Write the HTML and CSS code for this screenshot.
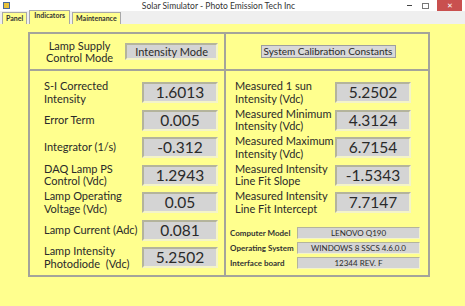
FILE: index.html
```html
<!DOCTYPE html>
<html lang="en">
<head>
  <meta charset="UTF-8" />
  <title>Solar Simulator - Photo Emission Tech Inc</title>
  <link rel="stylesheet" href="styles.css">
</head>
<body>
  <div class="window">
    <div class="titlebar">
      <span class="app-icon"></span>
      <span class="title">Solar Simulator - Photo Emission Tech Inc</span>
      <div class="controls">
        <span class="ctl-min"></span>
        <span class="ctl-max"></span>
        <span class="ctl-close">&#x2715;</span>
      </div>
    </div>

    <div class="tabs">
      <div class="tab">Panel</div>
      <div class="tab active">Indicators</div>
      <div class="tab">Maintenance</div>
    </div>

    <div class="panel">
      <div class="frame">
        <div class="cell cell-tl">
          <div class="mode-label">Lamp Supply<br>Control Mode</div>
          <div class="mode-box">Intensity Mode</div>
        </div>
        <div class="cell cell-tr">
          <div class="calib-btn">System Calibration Constants</div>
        </div>

        <div class="cell cell-bl">
          <div class="row"><div class="label">S-I Corrected<br>Intensity</div><div class="value">1.6013</div></div>
          <div class="row"><div class="label">Error Term</div><div class="value">0.005</div></div>
          <div class="row"><div class="label">Integrator (1/s)</div><div class="value">-0.312</div></div>
          <div class="row"><div class="label">DAQ Lamp PS<br>Control (Vdc)</div><div class="value">1.2943</div></div>
          <div class="row"><div class="label">Lamp Operating<br>Voltage (Vdc)</div><div class="value">0.05</div></div>
          <div class="row"><div class="label">Lamp Current (Adc)</div><div class="value">0.081</div></div>
          <div class="row"><div class="label">Lamp Intensity<br>Photodiode&nbsp; (Vdc)</div><div class="value">5.2502</div></div>
        </div>

        <div class="cell cell-br">
          <div class="row"><div class="label">Measured 1 sun<br>Intensity (Vdc)</div><div class="value">5.2502</div></div>
          <div class="row"><div class="label">Measured Minimum<br>Intensity (Vdc)</div><div class="value">4.3124</div></div>
          <div class="row"><div class="label">Measured Maximum<br>Intensity (Vdc)</div><div class="value">6.7154</div></div>
          <div class="row"><div class="label">Measured Intensity<br>Line Fit Slope</div><div class="value">-1.5343</div></div>
          <div class="row"><div class="label">Measured Intensity<br>Line Fit Intercept</div><div class="value">7.7147</div></div>

          <div class="info">
            <div class="info-row"><span class="info-label">Computer Model</span><span class="info-box">LENOVO Q190</span></div>
            <div class="info-row"><span class="info-label">Operating System</span><span class="info-box">WINDOWS 8 SSCS 4.6.0.0</span></div>
            <div class="info-row"><span class="info-label">Interface board</span><span class="info-box">12344 REV. F</span></div>
          </div>
        </div>
      </div>
    </div>
  </div>
</body>
</html>
```

FILE: styles.css
```css
body {
  margin: 0;
  font-family: 'Lato', 'Open Sans', sans-serif;
  color: #2a2a2a;
  background: #ffff8e;
}

.window {
  width: 465px;
  height: 306px;
  display: flex;
  flex-direction: column;
  overflow: hidden;
}

/* Title bar */
.titlebar {
  height: 11px;
  background: #fff;
  display: flex;
  align-items: center;
}

.app-icon {
  width: 5px;
  height: 5px;
  margin-left: 3px;
  background: #e8c23a;
  border: 1px solid #4a6a9a;
}

.title {
  flex: 1;
  text-align: center;
  font-size: 8.5px;
  color: #333;
  margin-left: 20px;
}

.controls {
  display: flex;
  align-items: center;
  height: 100%;
}

.ctl-min {
  width: 5px;
  height: 1px;
  background: #444;
  margin-right: 10px;
}

.ctl-max {
  width: 5px;
  height: 4px;
  border: 1px solid #777;
  margin-right: 8px;
}

.ctl-close {
  width: 25px;
  height: 11px;
  background: #c9504f;
  color: #fff;
  font-size: 7px;
  line-height: 11px;
  text-align: center;
  margin-right: 3px;
}

/* Tabs */
.tabs {
  height: 13px;
  background: #efefef;
  display: flex;
  align-items: flex-end;
  padding-left: 2px;
  gap: 2px;
}

.tab {
  height: 11px;
  padding: 0 3px;
  background: #ffff8e;
  border: 1px solid #a8a8a8;
  border-bottom: none;
  font-size: 7px;
  line-height: 11px;
  font-weight: 700;
  color: #333;
}

.tab.active {
  height: 14px;
  margin-bottom: -1px;
  padding: 0 4px;
  line-height: 9px;
}

/* Panel */
.panel {
  flex: 1;
  background: #ffff8e;
  padding: 8px 0 0 28px;
}

.frame {
  width: 402px;
  height: 245px;
  box-sizing: border-box;
  border: 2px solid #a4a49a;
  display: grid;
  grid-template-columns: 196px 1fr;
  grid-template-rows: 37px 1fr;
}

.cell {
  box-sizing: border-box;
}

.cell-tl, .cell-bl {
  border-right: 2px solid #a4a49a;
}

.cell-tl, .cell-tr {
  border-bottom: 2px solid #a4a49a;
}

.cell-tl {
  display: flex;
  align-items: center;
  padding: 0 6px 0 16px;
}

.mode-label {
  flex: 1;
  font-size: 11px;
  line-height: 12px;
  text-align: center;
  padding-right: 12px;
  white-space: nowrap;
}

.mode-box {
  width: 93px;
  height: 17px;
  box-sizing: border-box;
  background: #d4d4d4;
  border: 2px solid;
  border-color: #b4b49c #f4f4c8 #f4f4c8 #b4b49c;
  font-size: 11px;
  line-height: 13px;
  text-align: center;
}

.cell-tr {
  display: flex;
  align-items: center;
  justify-content: center;
  padding-left: 2px;
}

.calib-btn {
  width: 135px;
  height: 13px;
  box-sizing: border-box;
  background: #d8d8d8;
  border: 1px solid #9e9e9e;
  font-size: 10px;
  line-height: 11px;
  text-align: center;
}

/* Indicator rows */
.cell-bl, .cell-br {
  display: flex;
  flex-direction: column;
  gap: 6.5px;
  padding-top: 11px;
}

.cell-bl {
  padding-left: 14px;
  padding-right: 6px;
}

.cell-br {
  padding-left: 9px;
  padding-right: 17px;
}

.row {
  height: 21px;
  display: flex;
  align-items: center;
}

.label {
  flex: 1;
  font-size: 11px;
  line-height: 12.5px;
  white-space: nowrap;
}

.value {
  width: 76px;
  height: 21px;
  box-sizing: border-box;
  background: #d4d4d4;
  border: 2px solid;
  border-color: #b4b49c #f4f4c8 #f4f4c8 #b4b49c;
  font-size: 15.5px;
  line-height: 17px;
  text-align: center;
}

/* System info */
.info {
  display: flex;
  flex-direction: column;
  gap: 3px;
  margin: 7px -14px 0 -5px;
}

.info-row {
  height: 12px;
  display: flex;
  align-items: center;
}

.info-label {
  width: 67px;
  font-size: 8px;
  font-weight: 700;
  color: #333;
}

.info-box {
  width: 123px;
  height: 12px;
  box-sizing: border-box;
  background: #d4d4d4;
  border: 1px solid;
  border-color: #b4b49c #f4f4c8 #f4f4c8 #b4b49c;
  font-size: 8px;
  line-height: 10px;
  text-align: center;
}
```
